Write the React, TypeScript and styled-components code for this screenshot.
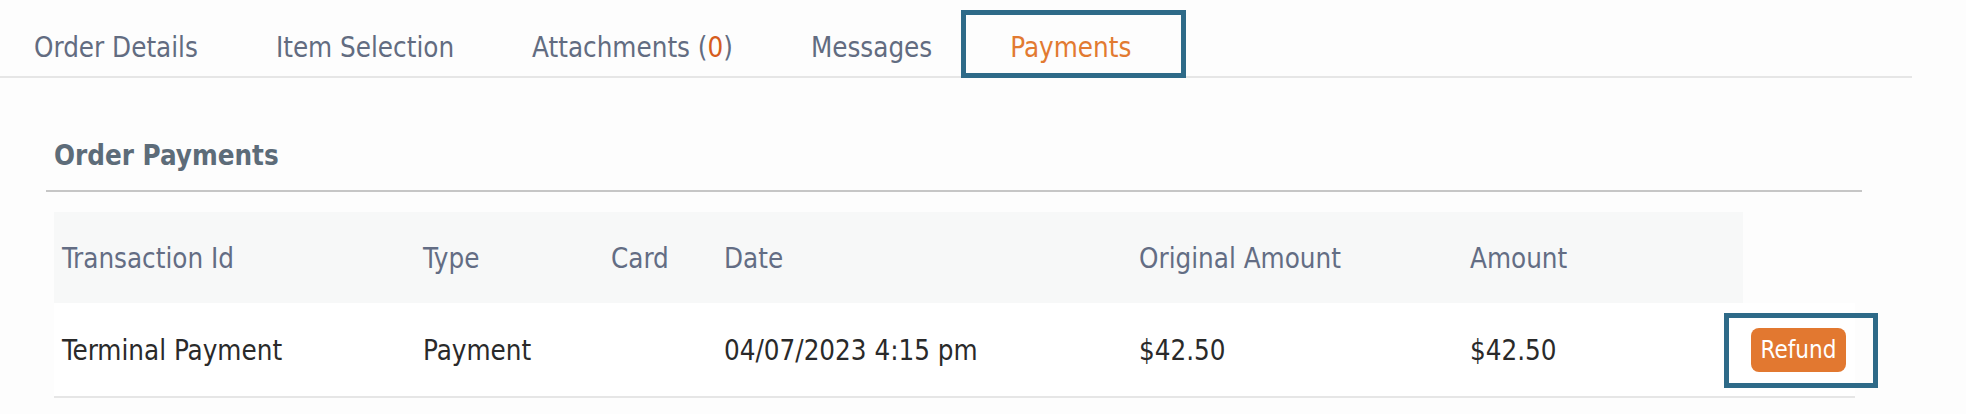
import styled, { createGlobalStyle } from 'styled-components'

const GlobalStyle = createGlobalStyle`
   body {
      margin: 0;
      background: #fdfdfd;
      font-family: 'DejaVu Sans Condensed', 'DejaVu Sans', 'Liberation Sans', sans-serif;
      font-stretch: condensed;
   }
`

const tabs = ['Order Details', 'Item Selection', 'Attachments', 'Messages', 'Payments']

const columns = [
   { label: 'Transaction Id', width: 361 },
   { label: 'Type', width: 188 },
   { label: 'Card', width: 113 },
   { label: 'Date', width: 415 },
   { label: 'Original Amount', width: 331 },
   { label: 'Amount', width: 281 },
]

const payments = [
   {
      id: 'Terminal Payment',
      type: 'Payment',
      card: '',
      date: '04/07/2023 4:15 pm',
      original: '$42.50',
      amount: '$42.50',
   },
]

const App = () => {
   const active = 'Payments'

   return (
      <>
         <GlobalStyle />
         <TabBar>
            {tabs.map(tab => (
               <Tab key={tab} $active={tab === active}>
                  {tab}
                  {tab === 'Attachments' && (
                     <>
                        {' ('}
                        <Count>0</Count>)
                     </>
                  )}
               </Tab>
            ))}
         </TabBar>

         <Section>
            <Heading>Order Payments</Heading>

            <Table>
               <colgroup>
                  {columns.map(c => (
                     <col key={c.label} style={{ width: c.width }} />
                  ))}
                  <col style={{ width: 112 }} />
               </colgroup>
               <thead>
                  <tr>
                     {columns.map(c => (
                        <Th key={c.label}>{c.label}</Th>
                     ))}
                     <EmptyTh />
                  </tr>
               </thead>
               <tbody>
                  {payments.map(p => (
                     <tr key={p.id}>
                        <Td>{p.id}</Td>
                        <Td>{p.type}</Td>
                        <Td>{p.card}</Td>
                        <Td>{p.date}</Td>
                        <Td>{p.original}</Td>
                        <Td>{p.amount}</Td>
                        <Td>
                           <Callout>
                              <RefundButton>Refund</RefundButton>
                           </Callout>
                        </Td>
                     </tr>
                  ))}
               </tbody>
            </Table>
         </Section>
      </>
   )
}

const TabBar = styled.nav`
   display: flex;
   gap: 78px;
   width: 1912px;
   height: 78px;
   padding-left: 34px;
   box-sizing: border-box;
   border-bottom: 2px solid #e6e6e6;
`

const Tab = styled.div<{ $active?: boolean }>`
   position: relative;
   padding-top: 31px;
   font-size: 27.5px;
   line-height: 32px;
   color: ${p => (p.$active ? '#e27a31' : '#626c81')};
   white-space: nowrap;

   ${p =>
      p.$active &&
      `
      &::after {
         content: '';
         position: absolute;
         top: 10px;
         bottom: -2px;
         left: -49px;
         right: -55px;
         border: 5px solid #2e6a88;
      }
   `}
`

const Count = styled.span`
   color: #d65d1d;
`

const Section = styled.section`
   margin: 0 0 0 46px;
   width: 1816px;
`

const Heading = styled.h2`
   margin: 0;
   padding: 62px 0 20px 8px;
   font-size: 27.5px;
   line-height: 30px;
   font-weight: bold;
   color: #5d6c79;
   border-bottom: 2px solid #c6c6c6;
`

const Table = styled.table`
   margin: 20px 0 0 8px;
   width: 1801px;
   border-collapse: collapse;
   table-layout: fixed;
`

const Th = styled.th`
   height: 91px;
   padding: 0 0 0 8px;
   text-align: left;
   font-weight: normal;
   font-size: 27.5px;
   color: #636d84;
   background: #f7f8f8;
`

const EmptyTh = styled.th`
   background: transparent;
`

const Td = styled.td`
   height: 93px;
   padding: 0 0 0 8px;
   font-size: 27.5px;
   color: #2a2a2a;
   background: #fff;
   border-bottom: 2px solid #e6e6e6;
   white-space: nowrap;
`

const Callout = styled.span`
   position: relative;
   display: inline-block;

   &::after {
      content: '';
      position: absolute;
      top: -15px;
      bottom: -16px;
      left: -27px;
      right: -32px;
      border: 5px solid #2e6a88;
   }
`

const RefundButton = styled.button`
   display: block;
   width: 95px;
   height: 44px;
   padding: 0;
   border: none;
   border-radius: 8px;
   background: #e27830;
   color: #fff;
   font-family: inherit;
   font-stretch: condensed;
   font-size: 24px;
`

export default App
